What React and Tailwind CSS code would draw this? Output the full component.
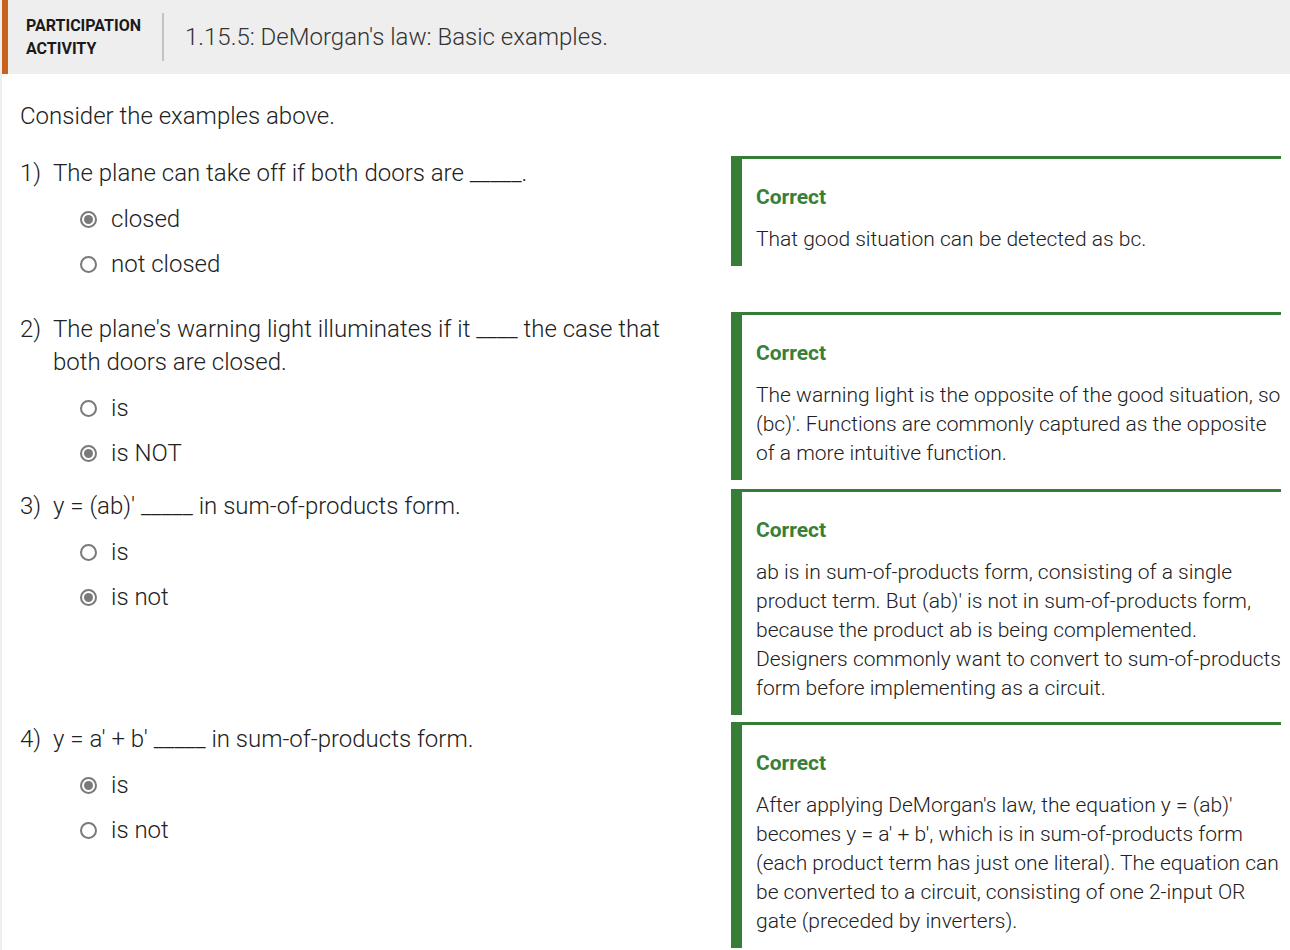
import React from "react";

function Radio({ checked }) {
  return (
    <span className="flex h-[17px] w-[17px] shrink-0 items-center justify-center rounded-full border-2 border-[#7a7a7a] bg-white">
      {checked && <span className="h-[9px] w-[9px] rounded-full bg-[#7a7a7a]" />}
    </span>
  );
}

function Option({ label, checked }) {
  return (
    <div className="flex h-[45px] items-center gap-[14px] pl-[27px]">
      <Radio checked={checked} />
      <span>{label}</span>
    </div>
  );
}

function Lines({ lines }) {
  return lines.map((l, i) => (
    <div key={i} className="whitespace-nowrap">
      {l}
    </div>
  ));
}

function Feedback({ lines }) {
  return (
    <div className="w-[550px] shrink-0 border-l-[11px] border-t-[3px] border-[#367d37] bg-white pb-[12px] pl-[14px] pt-[24px] text-[21px] leading-[29px] text-[#212121]">
      <div className="mb-[13px] font-bold text-[#3a7f37]">Correct</div>
      <Lines lines={lines} />
    </div>
  );
}

function Row({ num, question, options, feedback, minH }) {
  return (
    <div className={"flex items-start " + minH}>
      <div className="flex flex-1 pr-[20px] pt-[1px]">
        <span className="w-[33px] shrink-0">{num})</span>
        <div className="flex-1">
          <div className="mb-[7px]">
            <Lines lines={question} />
          </div>
          {options.map((o) => (
            <Option key={o.label} label={o.label} checked={o.checked} />
          ))}
        </div>
      </div>
      <Feedback lines={feedback} />
    </div>
  );
}

export default function App() {
  return (
    <div className="min-h-[950px] border-l-2 border-[#eeeeee] bg-white font-['Roboto',sans-serif] font-light text-[#212121]">
      <div className="flex h-[74px] items-center border-l-[6px] border-[#c9601c] bg-[#eeeeee] pl-[18px]">
        <div className="w-[136px] text-[16px] font-bold leading-[23px] text-[#1a1a1a]">
          PARTICIPATION
          <br />
          ACTIVITY
        </div>
        <div className="h-[48px] w-[2px] bg-[#c2c2c2]" />
        <div className="ml-[21px] text-[24px] text-[#333333]">1.15.5: DeMorgan's law: Basic examples.</div>
      </div>

      <div className="pl-[18px] pr-[9px] text-[24px] leading-[33px]">
        <div className="mb-[23px] mt-[26px]">Consider the examples above.</div>

        <Row
          num="1"
          minH="min-h-[156px]"
          question={["The plane can take off if both doors are _____."]}
          options={[
            { label: "closed", checked: true },
            { label: "not closed", checked: false },
          ]}
          feedback={["That good situation can be detected as bc."]}
        />
        <Row
          num="2"
          minH="min-h-[177px]"
          question={["The plane's warning light illuminates if it ____ the case that", "both doors are closed."]}
          options={[
            { label: "is", checked: false },
            { label: "is NOT", checked: true },
          ]}
          feedback={[
            "The warning light is the opposite of the good situation, so",
            "(bc)'. Functions are commonly captured as the opposite",
            "of a more intuitive function.",
          ]}
        />
        <Row
          num="3"
          minH="min-h-[233px]"
          question={["y = (ab)' _____ in sum-of-products form."]}
          options={[
            { label: "is", checked: false },
            { label: "is not", checked: true },
          ]}
          feedback={[
            "ab is in sum-of-products form, consisting of a single",
            "product term. But (ab)' is not in sum-of-products form,",
            "because the product ab is being complemented.",
            "Designers commonly want to convert to sum-of-products",
            "form before implementing as a circuit.",
          ]}
        />
        <Row
          num="4"
          minH="min-h-[226px]"
          question={["y = a' + b' _____ in sum-of-products form."]}
          options={[
            { label: "is", checked: true },
            { label: "is not", checked: false },
          ]}
          feedback={[
            "After applying DeMorgan's law, the equation y = (ab)'",
            "becomes y = a' + b', which is in sum-of-products form",
            "(each product term has just one literal). The equation can",
            "be converted to a circuit, consisting of one 2-input OR",
            "gate (preceded by inverters).",
          ]}
        />
      </div>
    </div>
  );
}
